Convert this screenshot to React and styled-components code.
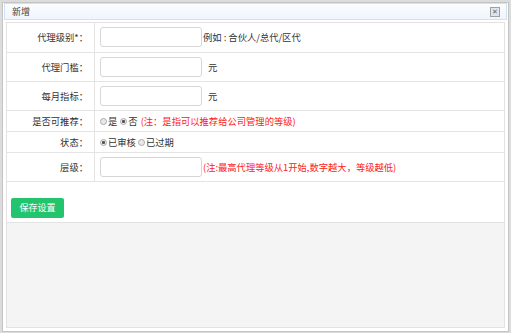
import React from "react"
import styled, { createGlobalStyle } from "styled-components"

const Global = createGlobalStyle`
  html, body {
    margin: 0;
    padding: 0;
    background: #dcdcdc;
    font-family: "Noto Sans CJK SC", "Liberation Sans", sans-serif;
    font-size: 9.3px;
    line-height: 12px;
    color: #333;
  }
`

const Win = styled.div`
  box-sizing: border-box;
  width: 507px;
  height: 330px;
  margin: 2px 0 0 2px;
  border: 1px solid #c4c4c4;
  background: #fff;
  padding: 0 3px 3px 3px;
  display: flex;
  flex-direction: column;
`

const Head = styled.div`
  height: 15px;
  margin: 0 -2px;
  border: 1px solid #d4e2f0;
  background: linear-gradient(#fbfdff, #eef5fc);
  display: flex;
  align-items: center;
  justify-content: space-between;
  padding: 0 6px 0 7px;
  font-size: 9px;
  color: #444;
`

const Close = styled.span`
  width: 8px;
  height: 8px;
  border: 1px solid #a0a0a0;
  background: #e4e4e4;
  display: flex;
  align-items: center;
  justify-content: center;
  font-size: 7px;
  line-height: 1;
  color: #666;
`

const Panel = styled.div`
  flex: 1;
  margin-top: 2px;
  border: 1px solid #e2e2e2;
  background: #f4f4f4;
`

const Form = styled.div`
  background: #fff;
  border-bottom: 1px solid #e2e2e2;
  height: 199px;
`

const Table = styled.table`
  width: 100%;
  border-collapse: collapse;
`

const Row = styled.tr`
  height: ${p => p.$h}px;
  border-bottom: 1px solid #e4e4e4;
`

const Label = styled.td`
  width: 81px;
  text-align: right;
  padding: 0 6px 0 0;
  border-right: 1px solid #e4e4e4;
  white-space: nowrap;
  color: #333;
`

const Cell = styled.td`
  padding: 0 0 0 5px;
  white-space: nowrap;
  vertical-align: middle;
`

const Input = styled.span`
  display: inline-block;
  vertical-align: middle;
  box-sizing: border-box;
  width: 102px;
  height: 20px;
  border: 1px solid #d6d6d6;
  border-radius: 3px;
  background: #fff;
`

const After = styled.span`
  vertical-align: middle;
  margin-left: ${p => p.$gap || 1}px;
  color: ${p => (p.$red ? "#ff2020" : "#333")};
`

const Radio = styled.span`
  display: inline-block;
  vertical-align: middle;
  box-sizing: border-box;
  width: 7px;
  height: 7px;
  border-radius: 50%;
  border: 1px solid #aaa;
  background: ${p => (p.$on ? "radial-gradient(#555 0 1.3px, #eee 1.8px)" : "#e9e9e9")};
  margin: 0 1px 0 ${p => p.$ml || 0}px;
`

const Opt = styled.span`
  vertical-align: middle;
`

const Foot = styled.div`
  padding: 16px 0 0 4px;
`

const Btn = styled.button`
  display: block;
  width: 53px;
  height: 20px;
  border: none;
  border-radius: 2px;
  background: #22c56d;
  color: #fff;
  font-family: inherit;
  font-size: 9px;
  padding: 0;
`

export default function App() {
  return (
    <>
      <Global />
      <Win>
        <Head>
          新增
          <Close>✕</Close>
        </Head>
        <Panel>
          <Form>
            <Table>
              <tbody>
                <Row $h={29}>
                  <Label>代理级别*：</Label>
                  <Cell>
                    <Input />
                    <After>例如 : 合伙人/总代/区代</After>
                  </Cell>
                </Row>
                <Row $h={29}>
                  <Label>代理门槛：</Label>
                  <Cell>
                    <Input />
                    <After $gap={6}>元</After>
                  </Cell>
                </Row>
                <Row $h={29}>
                  <Label>每月指标：</Label>
                  <Cell>
                    <Input />
                    <After $gap={6}>元</After>
                  </Cell>
                </Row>
                <Row $h={21}>
                  <Label>是否可推荐：</Label>
                  <Cell>
                    <Radio />
                    <Opt>是</Opt>
                    <Radio $on $ml={3} />
                    <Opt>否</Opt>
                    <After $red $gap={3}>(注：是指可以推荐给公司管理的等级)</After>
                  </Cell>
                </Row>
                <Row $h={21}>
                  <Label>状态：</Label>
                  <Cell>
                    <Radio $on />
                    <Opt>已审核</Opt>
                    <Radio $ml={2} />
                    <Opt>已过期</Opt>
                  </Cell>
                </Row>
                <Row $h={29}>
                  <Label>层级：</Label>
                  <Cell>
                    <Input />
                    <After $red>(注:最高代理等级从1开始,数字越大，等级越低)</After>
                  </Cell>
                </Row>
              </tbody>
            </Table>
            <Foot>
              <Btn>保存设置</Btn>
            </Foot>
          </Form>
        </Panel>
      </Win>
    </>
  )
}
